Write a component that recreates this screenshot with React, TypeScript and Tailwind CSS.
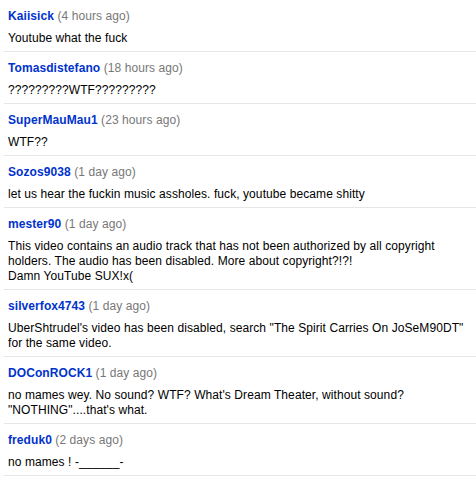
type Comment = {
  author: string;
  age: string;
  lines: string[];
};

const comments: Comment[] = [
  { author: "Kaiisick", age: "4 hours ago", lines: ["Youtube what the fuck"] },
  { author: "Tomasdistefano", age: "18 hours ago", lines: ["?????????WTF?????????"] },
  { author: "SuperMauMau1", age: "23 hours ago", lines: ["WTF??"] },
  {
    author: "Sozos9038",
    age: "1 day ago",
    lines: ["let us hear the fuckin music assholes. fuck, youtube became shitty"],
  },
  {
    author: "mester90",
    age: "1 day ago",
    lines: [
      "This video contains an audio track that has not been authorized by all copyright",
      "holders. The audio has been disabled. More about copyright?!?!",
      "Damn YouTube SUX!x(",
    ],
  },
  {
    author: "silverfox4743",
    age: "1 day ago",
    lines: [
      'UberShtrudel\'s video has been disabled, search "The Spirit Carries On JoSeM90DT"',
      "for the same video.",
    ],
  },
  {
    author: "DOConROCK1",
    age: "1 day ago",
    lines: [
      "no mames wey. No sound? WTF? What's Dream Theater, without sound?",
      '"NOTHING"....that\'s what.',
    ],
  },
  { author: "freduk0", age: "2 days ago", lines: ["no mames ! -______-"] },
];

export default function App() {
  return (
    <div
      className="min-h-[480px] w-[476px] bg-white pl-1 text-[12px] leading-[15px] tracking-[0.08px] text-black"
      style={{ fontFamily: '"Liberation Sans", Arial, sans-serif' }}
    >
      {comments.map((c) => (
        <div key={c.author} className="border-b border-[#e6e6e6] pl-1 pb-[5px] pt-[9px]">
          <div className="whitespace-nowrap">
            <span className="font-bold text-[#0033cc]">{c.author}</span>{" "}
            <span className="text-[#777777]">({c.age})</span>
          </div>
          <div className="mt-[7px]">
            {c.lines.map((l, i) => (
              <div key={i} className="whitespace-pre">
                {l}
              </div>
            ))}
          </div>
        </div>
      ))}
    </div>
  );
}
